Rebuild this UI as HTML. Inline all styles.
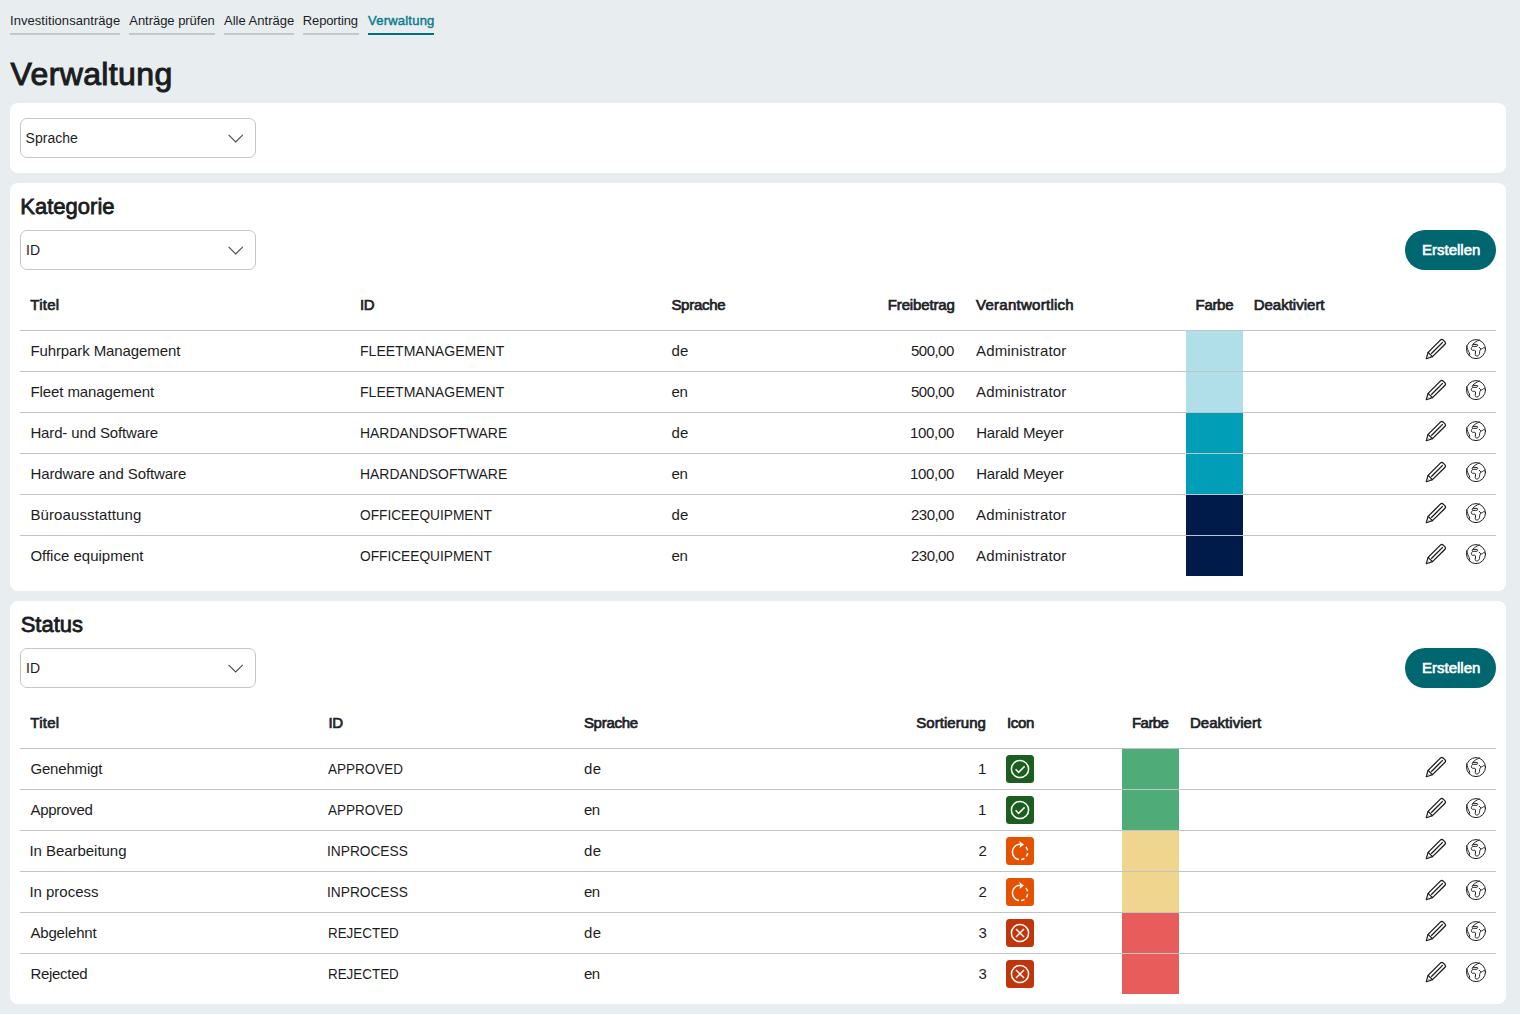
<!DOCTYPE html>
<html><head><meta charset="utf-8"><title>Verwaltung</title><style>
html,body{margin:0;padding:0;}
body{width:1520px;height:1015px;background:#e8edf0;position:relative;overflow:hidden;font-family:"Liberation Sans",sans-serif;color:#1d1d1f;}
.t{position:absolute;white-space:nowrap;line-height:20px;}
.card{position:absolute;left:10px;width:1496px;background:#fff;border-radius:8px;}
.sel{position:absolute;left:20px;width:234px;height:38px;border:1px solid #bfc7ca;border-radius:7px;background:#fff;}
.btn{position:absolute;left:1405px;width:91px;height:40px;border-radius:20px;background:#00666f;}
.hl{position:absolute;left:20px;width:1476px;height:1px;background:#bec6c8;}
.sw{position:absolute;height:40px;width:57px;}
.ic{position:absolute;width:28px;height:28px;}
.ic svg{display:block}
.ul{position:absolute;top:33px;height:2px;background:#c1c8cb;}
.chev{display:block}
</style></head><body>
<div class="ul" style="left:10px;width:110px;"></div>
<div class="ul" style="left:129px;width:86px;"></div>
<div class="ul" style="left:224px;width:70px;"></div>
<div class="ul" style="left:303px;width:56px;"></div>
<div class="ul" style="left:368px;width:66px;background:#00707a;"></div>
<div class="card" style="top:103px;height:70px"></div>
<div class="sel" style="top:118px"></div><div class="t" style="left:228px;top:134px"><svg class="chev" width="16" height="9" viewBox="0 0 16 9"><path d="M0.6 0.9 L7.7 7.9 L14.8 0.9" fill="none" stroke="#4a4a4a" stroke-width="1.1"/></svg></div>
<div class="card" style="top:183px;height:408px"></div>
<div class="sel" style="top:230px"></div><div class="t" style="left:228px;top:246px"><svg class="chev" width="16" height="9" viewBox="0 0 16 9"><path d="M0.6 0.9 L7.7 7.9 L14.8 0.9" fill="none" stroke="#4a4a4a" stroke-width="1.1"/></svg></div>
<div class="btn" style="top:230px"></div>
<div class="sw" style="top:331px;left:1186px;background:#b0dfea"></div>
<div class="hl" style="top:330px"></div>
<div class="ic" style="left:1420px;top:335px"><svg width="28" height="28" viewBox="0 0 28 28"><g fill="none" stroke="#1a1a1a" stroke-width="1.3" stroke-linejoin="round"><path d="M8.1 17.4 L20.6 4.9 Q21.8 3.8 23 4.9 L25 6.9 Q26.1 8.1 25 9.3 L12.5 21.6 Z"/><path d="M8.1 17.4 L6.3 23.6 L12.5 21.6"/><path d="M11.2 18.7 L22.8 7.1"/></g><path d="M6.6 23.3 L7.6 20.4 L9.6 22.4 Z" fill="#9a9a9a"/></svg></div><div class="ic" style="left:1460px;top:335px"><svg width="28" height="28" viewBox="0 0 28 28"><g fill="none" stroke="#222" stroke-width="1.0" stroke-linejoin="round" stroke-linecap="round"><circle cx="16" cy="14.1" r="9.5"/><path d="M19.4 5 C18 5.6 16.8 6 15.8 6.8 C14.6 7.6 13.6 8.4 12.5 9.6 C12 10.3 12.3 11.2 13.1 11.3 L17 11.3 C17.9 11.2 17.9 9.5 17 9.4 L13.2 9.4"/><path d="M12.6 11.5 C11.8 12.2 11.2 13 11.3 14 C11.5 15 12.3 15.3 13.2 15.3 L14.8 15.3 C15.5 15.4 15.6 16 15.5 17 L15.2 19.5 C15.1 20.6 16 21 16.9 21 C18 21 19.2 20 19.5 18.5 L19.7 16.4 C19.8 15.5 20.2 14.8 20.8 14.3"/><path d="M19.2 12.3 C19.6 13 20.2 13.6 20.9 13.8 C21.8 14 22.5 13.6 23.4 12.8 C24.3 12.3 25 12.9 25.6 13.8"/><path d="M6.6 10.8 C7.3 13.8 8.3 16 9.3 17.8 C9.8 18.8 9.8 19.8 9.6 20.6"/></g></svg></div>
<div class="sw" style="top:372px;left:1186px;background:#b0dfea"></div>
<div class="hl" style="top:371px"></div>
<div class="ic" style="left:1420px;top:376px"><svg width="28" height="28" viewBox="0 0 28 28"><g fill="none" stroke="#1a1a1a" stroke-width="1.3" stroke-linejoin="round"><path d="M8.1 17.4 L20.6 4.9 Q21.8 3.8 23 4.9 L25 6.9 Q26.1 8.1 25 9.3 L12.5 21.6 Z"/><path d="M8.1 17.4 L6.3 23.6 L12.5 21.6"/><path d="M11.2 18.7 L22.8 7.1"/></g><path d="M6.6 23.3 L7.6 20.4 L9.6 22.4 Z" fill="#9a9a9a"/></svg></div><div class="ic" style="left:1460px;top:376px"><svg width="28" height="28" viewBox="0 0 28 28"><g fill="none" stroke="#222" stroke-width="1.0" stroke-linejoin="round" stroke-linecap="round"><circle cx="16" cy="14.1" r="9.5"/><path d="M19.4 5 C18 5.6 16.8 6 15.8 6.8 C14.6 7.6 13.6 8.4 12.5 9.6 C12 10.3 12.3 11.2 13.1 11.3 L17 11.3 C17.9 11.2 17.9 9.5 17 9.4 L13.2 9.4"/><path d="M12.6 11.5 C11.8 12.2 11.2 13 11.3 14 C11.5 15 12.3 15.3 13.2 15.3 L14.8 15.3 C15.5 15.4 15.6 16 15.5 17 L15.2 19.5 C15.1 20.6 16 21 16.9 21 C18 21 19.2 20 19.5 18.5 L19.7 16.4 C19.8 15.5 20.2 14.8 20.8 14.3"/><path d="M19.2 12.3 C19.6 13 20.2 13.6 20.9 13.8 C21.8 14 22.5 13.6 23.4 12.8 C24.3 12.3 25 12.9 25.6 13.8"/><path d="M6.6 10.8 C7.3 13.8 8.3 16 9.3 17.8 C9.8 18.8 9.8 19.8 9.6 20.6"/></g></svg></div>
<div class="sw" style="top:413px;left:1186px;background:#009fb7"></div>
<div class="hl" style="top:412px"></div>
<div class="ic" style="left:1420px;top:417px"><svg width="28" height="28" viewBox="0 0 28 28"><g fill="none" stroke="#1a1a1a" stroke-width="1.3" stroke-linejoin="round"><path d="M8.1 17.4 L20.6 4.9 Q21.8 3.8 23 4.9 L25 6.9 Q26.1 8.1 25 9.3 L12.5 21.6 Z"/><path d="M8.1 17.4 L6.3 23.6 L12.5 21.6"/><path d="M11.2 18.7 L22.8 7.1"/></g><path d="M6.6 23.3 L7.6 20.4 L9.6 22.4 Z" fill="#9a9a9a"/></svg></div><div class="ic" style="left:1460px;top:417px"><svg width="28" height="28" viewBox="0 0 28 28"><g fill="none" stroke="#222" stroke-width="1.0" stroke-linejoin="round" stroke-linecap="round"><circle cx="16" cy="14.1" r="9.5"/><path d="M19.4 5 C18 5.6 16.8 6 15.8 6.8 C14.6 7.6 13.6 8.4 12.5 9.6 C12 10.3 12.3 11.2 13.1 11.3 L17 11.3 C17.9 11.2 17.9 9.5 17 9.4 L13.2 9.4"/><path d="M12.6 11.5 C11.8 12.2 11.2 13 11.3 14 C11.5 15 12.3 15.3 13.2 15.3 L14.8 15.3 C15.5 15.4 15.6 16 15.5 17 L15.2 19.5 C15.1 20.6 16 21 16.9 21 C18 21 19.2 20 19.5 18.5 L19.7 16.4 C19.8 15.5 20.2 14.8 20.8 14.3"/><path d="M19.2 12.3 C19.6 13 20.2 13.6 20.9 13.8 C21.8 14 22.5 13.6 23.4 12.8 C24.3 12.3 25 12.9 25.6 13.8"/><path d="M6.6 10.8 C7.3 13.8 8.3 16 9.3 17.8 C9.8 18.8 9.8 19.8 9.6 20.6"/></g></svg></div>
<div class="sw" style="top:454px;left:1186px;background:#009fb7"></div>
<div class="hl" style="top:453px"></div>
<div class="ic" style="left:1420px;top:458px"><svg width="28" height="28" viewBox="0 0 28 28"><g fill="none" stroke="#1a1a1a" stroke-width="1.3" stroke-linejoin="round"><path d="M8.1 17.4 L20.6 4.9 Q21.8 3.8 23 4.9 L25 6.9 Q26.1 8.1 25 9.3 L12.5 21.6 Z"/><path d="M8.1 17.4 L6.3 23.6 L12.5 21.6"/><path d="M11.2 18.7 L22.8 7.1"/></g><path d="M6.6 23.3 L7.6 20.4 L9.6 22.4 Z" fill="#9a9a9a"/></svg></div><div class="ic" style="left:1460px;top:458px"><svg width="28" height="28" viewBox="0 0 28 28"><g fill="none" stroke="#222" stroke-width="1.0" stroke-linejoin="round" stroke-linecap="round"><circle cx="16" cy="14.1" r="9.5"/><path d="M19.4 5 C18 5.6 16.8 6 15.8 6.8 C14.6 7.6 13.6 8.4 12.5 9.6 C12 10.3 12.3 11.2 13.1 11.3 L17 11.3 C17.9 11.2 17.9 9.5 17 9.4 L13.2 9.4"/><path d="M12.6 11.5 C11.8 12.2 11.2 13 11.3 14 C11.5 15 12.3 15.3 13.2 15.3 L14.8 15.3 C15.5 15.4 15.6 16 15.5 17 L15.2 19.5 C15.1 20.6 16 21 16.9 21 C18 21 19.2 20 19.5 18.5 L19.7 16.4 C19.8 15.5 20.2 14.8 20.8 14.3"/><path d="M19.2 12.3 C19.6 13 20.2 13.6 20.9 13.8 C21.8 14 22.5 13.6 23.4 12.8 C24.3 12.3 25 12.9 25.6 13.8"/><path d="M6.6 10.8 C7.3 13.8 8.3 16 9.3 17.8 C9.8 18.8 9.8 19.8 9.6 20.6"/></g></svg></div>
<div class="sw" style="top:495px;left:1186px;background:#001a4a"></div>
<div class="hl" style="top:494px"></div>
<div class="ic" style="left:1420px;top:499px"><svg width="28" height="28" viewBox="0 0 28 28"><g fill="none" stroke="#1a1a1a" stroke-width="1.3" stroke-linejoin="round"><path d="M8.1 17.4 L20.6 4.9 Q21.8 3.8 23 4.9 L25 6.9 Q26.1 8.1 25 9.3 L12.5 21.6 Z"/><path d="M8.1 17.4 L6.3 23.6 L12.5 21.6"/><path d="M11.2 18.7 L22.8 7.1"/></g><path d="M6.6 23.3 L7.6 20.4 L9.6 22.4 Z" fill="#9a9a9a"/></svg></div><div class="ic" style="left:1460px;top:499px"><svg width="28" height="28" viewBox="0 0 28 28"><g fill="none" stroke="#222" stroke-width="1.0" stroke-linejoin="round" stroke-linecap="round"><circle cx="16" cy="14.1" r="9.5"/><path d="M19.4 5 C18 5.6 16.8 6 15.8 6.8 C14.6 7.6 13.6 8.4 12.5 9.6 C12 10.3 12.3 11.2 13.1 11.3 L17 11.3 C17.9 11.2 17.9 9.5 17 9.4 L13.2 9.4"/><path d="M12.6 11.5 C11.8 12.2 11.2 13 11.3 14 C11.5 15 12.3 15.3 13.2 15.3 L14.8 15.3 C15.5 15.4 15.6 16 15.5 17 L15.2 19.5 C15.1 20.6 16 21 16.9 21 C18 21 19.2 20 19.5 18.5 L19.7 16.4 C19.8 15.5 20.2 14.8 20.8 14.3"/><path d="M19.2 12.3 C19.6 13 20.2 13.6 20.9 13.8 C21.8 14 22.5 13.6 23.4 12.8 C24.3 12.3 25 12.9 25.6 13.8"/><path d="M6.6 10.8 C7.3 13.8 8.3 16 9.3 17.8 C9.8 18.8 9.8 19.8 9.6 20.6"/></g></svg></div>
<div class="sw" style="top:536px;left:1186px;background:#001a4a"></div>
<div class="hl" style="top:535px"></div>
<div class="ic" style="left:1420px;top:540px"><svg width="28" height="28" viewBox="0 0 28 28"><g fill="none" stroke="#1a1a1a" stroke-width="1.3" stroke-linejoin="round"><path d="M8.1 17.4 L20.6 4.9 Q21.8 3.8 23 4.9 L25 6.9 Q26.1 8.1 25 9.3 L12.5 21.6 Z"/><path d="M8.1 17.4 L6.3 23.6 L12.5 21.6"/><path d="M11.2 18.7 L22.8 7.1"/></g><path d="M6.6 23.3 L7.6 20.4 L9.6 22.4 Z" fill="#9a9a9a"/></svg></div><div class="ic" style="left:1460px;top:540px"><svg width="28" height="28" viewBox="0 0 28 28"><g fill="none" stroke="#222" stroke-width="1.0" stroke-linejoin="round" stroke-linecap="round"><circle cx="16" cy="14.1" r="9.5"/><path d="M19.4 5 C18 5.6 16.8 6 15.8 6.8 C14.6 7.6 13.6 8.4 12.5 9.6 C12 10.3 12.3 11.2 13.1 11.3 L17 11.3 C17.9 11.2 17.9 9.5 17 9.4 L13.2 9.4"/><path d="M12.6 11.5 C11.8 12.2 11.2 13 11.3 14 C11.5 15 12.3 15.3 13.2 15.3 L14.8 15.3 C15.5 15.4 15.6 16 15.5 17 L15.2 19.5 C15.1 20.6 16 21 16.9 21 C18 21 19.2 20 19.5 18.5 L19.7 16.4 C19.8 15.5 20.2 14.8 20.8 14.3"/><path d="M19.2 12.3 C19.6 13 20.2 13.6 20.9 13.8 C21.8 14 22.5 13.6 23.4 12.8 C24.3 12.3 25 12.9 25.6 13.8"/><path d="M6.6 10.8 C7.3 13.8 8.3 16 9.3 17.8 C9.8 18.8 9.8 19.8 9.6 20.6"/></g></svg></div>
<div class="card" style="top:601px;height:403px"></div>
<div class="sel" style="top:648px"></div><div class="t" style="left:228px;top:664px"><svg class="chev" width="16" height="9" viewBox="0 0 16 9"><path d="M0.6 0.9 L7.7 7.9 L14.8 0.9" fill="none" stroke="#4a4a4a" stroke-width="1.1"/></svg></div>
<div class="btn" style="top:648px"></div>
<div class="sw" style="top:749px;left:1122px;background:#4fac78"></div>
<div class="hl" style="top:748px"></div>
<div class="ic" style="left:1006px;top:755px"><svg width="28" height="28" viewBox="0 0 28 28"><rect width="28" height="28" rx="3.5" fill="#1b5e20"/><circle cx="14" cy="14" r="8.6" fill="none" stroke="#fff" stroke-width="1.5"/><path d="M9.6 14.3 L12.6 17.4 L18.6 11.4" fill="none" stroke="#fff" stroke-width="1.5"/></svg></div>
<div class="ic" style="left:1420px;top:753px"><svg width="28" height="28" viewBox="0 0 28 28"><g fill="none" stroke="#1a1a1a" stroke-width="1.3" stroke-linejoin="round"><path d="M8.1 17.4 L20.6 4.9 Q21.8 3.8 23 4.9 L25 6.9 Q26.1 8.1 25 9.3 L12.5 21.6 Z"/><path d="M8.1 17.4 L6.3 23.6 L12.5 21.6"/><path d="M11.2 18.7 L22.8 7.1"/></g><path d="M6.6 23.3 L7.6 20.4 L9.6 22.4 Z" fill="#9a9a9a"/></svg></div><div class="ic" style="left:1460px;top:753px"><svg width="28" height="28" viewBox="0 0 28 28"><g fill="none" stroke="#222" stroke-width="1.0" stroke-linejoin="round" stroke-linecap="round"><circle cx="16" cy="14.1" r="9.5"/><path d="M19.4 5 C18 5.6 16.8 6 15.8 6.8 C14.6 7.6 13.6 8.4 12.5 9.6 C12 10.3 12.3 11.2 13.1 11.3 L17 11.3 C17.9 11.2 17.9 9.5 17 9.4 L13.2 9.4"/><path d="M12.6 11.5 C11.8 12.2 11.2 13 11.3 14 C11.5 15 12.3 15.3 13.2 15.3 L14.8 15.3 C15.5 15.4 15.6 16 15.5 17 L15.2 19.5 C15.1 20.6 16 21 16.9 21 C18 21 19.2 20 19.5 18.5 L19.7 16.4 C19.8 15.5 20.2 14.8 20.8 14.3"/><path d="M19.2 12.3 C19.6 13 20.2 13.6 20.9 13.8 C21.8 14 22.5 13.6 23.4 12.8 C24.3 12.3 25 12.9 25.6 13.8"/><path d="M6.6 10.8 C7.3 13.8 8.3 16 9.3 17.8 C9.8 18.8 9.8 19.8 9.6 20.6"/></g></svg></div>
<div class="sw" style="top:790px;left:1122px;background:#4fac78"></div>
<div class="hl" style="top:789px"></div>
<div class="ic" style="left:1006px;top:796px"><svg width="28" height="28" viewBox="0 0 28 28"><rect width="28" height="28" rx="3.5" fill="#1b5e20"/><circle cx="14" cy="14" r="8.6" fill="none" stroke="#fff" stroke-width="1.5"/><path d="M9.6 14.3 L12.6 17.4 L18.6 11.4" fill="none" stroke="#fff" stroke-width="1.5"/></svg></div>
<div class="ic" style="left:1420px;top:794px"><svg width="28" height="28" viewBox="0 0 28 28"><g fill="none" stroke="#1a1a1a" stroke-width="1.3" stroke-linejoin="round"><path d="M8.1 17.4 L20.6 4.9 Q21.8 3.8 23 4.9 L25 6.9 Q26.1 8.1 25 9.3 L12.5 21.6 Z"/><path d="M8.1 17.4 L6.3 23.6 L12.5 21.6"/><path d="M11.2 18.7 L22.8 7.1"/></g><path d="M6.6 23.3 L7.6 20.4 L9.6 22.4 Z" fill="#9a9a9a"/></svg></div><div class="ic" style="left:1460px;top:794px"><svg width="28" height="28" viewBox="0 0 28 28"><g fill="none" stroke="#222" stroke-width="1.0" stroke-linejoin="round" stroke-linecap="round"><circle cx="16" cy="14.1" r="9.5"/><path d="M19.4 5 C18 5.6 16.8 6 15.8 6.8 C14.6 7.6 13.6 8.4 12.5 9.6 C12 10.3 12.3 11.2 13.1 11.3 L17 11.3 C17.9 11.2 17.9 9.5 17 9.4 L13.2 9.4"/><path d="M12.6 11.5 C11.8 12.2 11.2 13 11.3 14 C11.5 15 12.3 15.3 13.2 15.3 L14.8 15.3 C15.5 15.4 15.6 16 15.5 17 L15.2 19.5 C15.1 20.6 16 21 16.9 21 C18 21 19.2 20 19.5 18.5 L19.7 16.4 C19.8 15.5 20.2 14.8 20.8 14.3"/><path d="M19.2 12.3 C19.6 13 20.2 13.6 20.9 13.8 C21.8 14 22.5 13.6 23.4 12.8 C24.3 12.3 25 12.9 25.6 13.8"/><path d="M6.6 10.8 C7.3 13.8 8.3 16 9.3 17.8 C9.8 18.8 9.8 19.8 9.6 20.6"/></g></svg></div>
<div class="sw" style="top:831px;left:1122px;background:#efd58e"></div>
<div class="hl" style="top:830px"></div>
<div class="ic" style="left:1006px;top:837px"><svg width="28" height="28" viewBox="0 0 28 28"><rect width="28" height="28" rx="3.5" fill="#e65100"/><path d="M12.9 22.6 A7.7 7.7 0 0 1 14.2 7.3" fill="none" stroke="#fff" stroke-width="1.5"/><path d="M13.2 4.1 L17.9 7.5 L13.5 11 L14.2 7.5 Z" fill="#fff"/><path d="M19.9 10.05 A7.7 7.7 0 0 1 15.2 22.6" fill="none" stroke="#fff" stroke-width="1.5" stroke-dasharray="3.7 2.6"/></svg></div>
<div class="ic" style="left:1420px;top:835px"><svg width="28" height="28" viewBox="0 0 28 28"><g fill="none" stroke="#1a1a1a" stroke-width="1.3" stroke-linejoin="round"><path d="M8.1 17.4 L20.6 4.9 Q21.8 3.8 23 4.9 L25 6.9 Q26.1 8.1 25 9.3 L12.5 21.6 Z"/><path d="M8.1 17.4 L6.3 23.6 L12.5 21.6"/><path d="M11.2 18.7 L22.8 7.1"/></g><path d="M6.6 23.3 L7.6 20.4 L9.6 22.4 Z" fill="#9a9a9a"/></svg></div><div class="ic" style="left:1460px;top:835px"><svg width="28" height="28" viewBox="0 0 28 28"><g fill="none" stroke="#222" stroke-width="1.0" stroke-linejoin="round" stroke-linecap="round"><circle cx="16" cy="14.1" r="9.5"/><path d="M19.4 5 C18 5.6 16.8 6 15.8 6.8 C14.6 7.6 13.6 8.4 12.5 9.6 C12 10.3 12.3 11.2 13.1 11.3 L17 11.3 C17.9 11.2 17.9 9.5 17 9.4 L13.2 9.4"/><path d="M12.6 11.5 C11.8 12.2 11.2 13 11.3 14 C11.5 15 12.3 15.3 13.2 15.3 L14.8 15.3 C15.5 15.4 15.6 16 15.5 17 L15.2 19.5 C15.1 20.6 16 21 16.9 21 C18 21 19.2 20 19.5 18.5 L19.7 16.4 C19.8 15.5 20.2 14.8 20.8 14.3"/><path d="M19.2 12.3 C19.6 13 20.2 13.6 20.9 13.8 C21.8 14 22.5 13.6 23.4 12.8 C24.3 12.3 25 12.9 25.6 13.8"/><path d="M6.6 10.8 C7.3 13.8 8.3 16 9.3 17.8 C9.8 18.8 9.8 19.8 9.6 20.6"/></g></svg></div>
<div class="sw" style="top:872px;left:1122px;background:#efd58e"></div>
<div class="hl" style="top:871px"></div>
<div class="ic" style="left:1006px;top:878px"><svg width="28" height="28" viewBox="0 0 28 28"><rect width="28" height="28" rx="3.5" fill="#e65100"/><path d="M12.9 22.6 A7.7 7.7 0 0 1 14.2 7.3" fill="none" stroke="#fff" stroke-width="1.5"/><path d="M13.2 4.1 L17.9 7.5 L13.5 11 L14.2 7.5 Z" fill="#fff"/><path d="M19.9 10.05 A7.7 7.7 0 0 1 15.2 22.6" fill="none" stroke="#fff" stroke-width="1.5" stroke-dasharray="3.7 2.6"/></svg></div>
<div class="ic" style="left:1420px;top:876px"><svg width="28" height="28" viewBox="0 0 28 28"><g fill="none" stroke="#1a1a1a" stroke-width="1.3" stroke-linejoin="round"><path d="M8.1 17.4 L20.6 4.9 Q21.8 3.8 23 4.9 L25 6.9 Q26.1 8.1 25 9.3 L12.5 21.6 Z"/><path d="M8.1 17.4 L6.3 23.6 L12.5 21.6"/><path d="M11.2 18.7 L22.8 7.1"/></g><path d="M6.6 23.3 L7.6 20.4 L9.6 22.4 Z" fill="#9a9a9a"/></svg></div><div class="ic" style="left:1460px;top:876px"><svg width="28" height="28" viewBox="0 0 28 28"><g fill="none" stroke="#222" stroke-width="1.0" stroke-linejoin="round" stroke-linecap="round"><circle cx="16" cy="14.1" r="9.5"/><path d="M19.4 5 C18 5.6 16.8 6 15.8 6.8 C14.6 7.6 13.6 8.4 12.5 9.6 C12 10.3 12.3 11.2 13.1 11.3 L17 11.3 C17.9 11.2 17.9 9.5 17 9.4 L13.2 9.4"/><path d="M12.6 11.5 C11.8 12.2 11.2 13 11.3 14 C11.5 15 12.3 15.3 13.2 15.3 L14.8 15.3 C15.5 15.4 15.6 16 15.5 17 L15.2 19.5 C15.1 20.6 16 21 16.9 21 C18 21 19.2 20 19.5 18.5 L19.7 16.4 C19.8 15.5 20.2 14.8 20.8 14.3"/><path d="M19.2 12.3 C19.6 13 20.2 13.6 20.9 13.8 C21.8 14 22.5 13.6 23.4 12.8 C24.3 12.3 25 12.9 25.6 13.8"/><path d="M6.6 10.8 C7.3 13.8 8.3 16 9.3 17.8 C9.8 18.8 9.8 19.8 9.6 20.6"/></g></svg></div>
<div class="sw" style="top:913px;left:1122px;background:#e85c5c"></div>
<div class="hl" style="top:912px"></div>
<div class="ic" style="left:1006px;top:919px"><svg width="28" height="28" viewBox="0 0 28 28"><rect width="28" height="28" rx="3.5" fill="#bf360c"/><circle cx="14" cy="14" r="8.6" fill="none" stroke="#fff" stroke-width="1.5"/><path d="M10 10 L18 18 M18 10 L10 18" fill="none" stroke="#fff" stroke-width="1.5"/></svg></div>
<div class="ic" style="left:1420px;top:917px"><svg width="28" height="28" viewBox="0 0 28 28"><g fill="none" stroke="#1a1a1a" stroke-width="1.3" stroke-linejoin="round"><path d="M8.1 17.4 L20.6 4.9 Q21.8 3.8 23 4.9 L25 6.9 Q26.1 8.1 25 9.3 L12.5 21.6 Z"/><path d="M8.1 17.4 L6.3 23.6 L12.5 21.6"/><path d="M11.2 18.7 L22.8 7.1"/></g><path d="M6.6 23.3 L7.6 20.4 L9.6 22.4 Z" fill="#9a9a9a"/></svg></div><div class="ic" style="left:1460px;top:917px"><svg width="28" height="28" viewBox="0 0 28 28"><g fill="none" stroke="#222" stroke-width="1.0" stroke-linejoin="round" stroke-linecap="round"><circle cx="16" cy="14.1" r="9.5"/><path d="M19.4 5 C18 5.6 16.8 6 15.8 6.8 C14.6 7.6 13.6 8.4 12.5 9.6 C12 10.3 12.3 11.2 13.1 11.3 L17 11.3 C17.9 11.2 17.9 9.5 17 9.4 L13.2 9.4"/><path d="M12.6 11.5 C11.8 12.2 11.2 13 11.3 14 C11.5 15 12.3 15.3 13.2 15.3 L14.8 15.3 C15.5 15.4 15.6 16 15.5 17 L15.2 19.5 C15.1 20.6 16 21 16.9 21 C18 21 19.2 20 19.5 18.5 L19.7 16.4 C19.8 15.5 20.2 14.8 20.8 14.3"/><path d="M19.2 12.3 C19.6 13 20.2 13.6 20.9 13.8 C21.8 14 22.5 13.6 23.4 12.8 C24.3 12.3 25 12.9 25.6 13.8"/><path d="M6.6 10.8 C7.3 13.8 8.3 16 9.3 17.8 C9.8 18.8 9.8 19.8 9.6 20.6"/></g></svg></div>
<div class="sw" style="top:954px;left:1122px;background:#e85c5c"></div>
<div class="hl" style="top:953px"></div>
<div class="ic" style="left:1006px;top:960px"><svg width="28" height="28" viewBox="0 0 28 28"><rect width="28" height="28" rx="3.5" fill="#bf360c"/><circle cx="14" cy="14" r="8.6" fill="none" stroke="#fff" stroke-width="1.5"/><path d="M10 10 L18 18 M18 10 L10 18" fill="none" stroke="#fff" stroke-width="1.5"/></svg></div>
<div class="ic" style="left:1420px;top:958px"><svg width="28" height="28" viewBox="0 0 28 28"><g fill="none" stroke="#1a1a1a" stroke-width="1.3" stroke-linejoin="round"><path d="M8.1 17.4 L20.6 4.9 Q21.8 3.8 23 4.9 L25 6.9 Q26.1 8.1 25 9.3 L12.5 21.6 Z"/><path d="M8.1 17.4 L6.3 23.6 L12.5 21.6"/><path d="M11.2 18.7 L22.8 7.1"/></g><path d="M6.6 23.3 L7.6 20.4 L9.6 22.4 Z" fill="#9a9a9a"/></svg></div><div class="ic" style="left:1460px;top:958px"><svg width="28" height="28" viewBox="0 0 28 28"><g fill="none" stroke="#222" stroke-width="1.0" stroke-linejoin="round" stroke-linecap="round"><circle cx="16" cy="14.1" r="9.5"/><path d="M19.4 5 C18 5.6 16.8 6 15.8 6.8 C14.6 7.6 13.6 8.4 12.5 9.6 C12 10.3 12.3 11.2 13.1 11.3 L17 11.3 C17.9 11.2 17.9 9.5 17 9.4 L13.2 9.4"/><path d="M12.6 11.5 C11.8 12.2 11.2 13 11.3 14 C11.5 15 12.3 15.3 13.2 15.3 L14.8 15.3 C15.5 15.4 15.6 16 15.5 17 L15.2 19.5 C15.1 20.6 16 21 16.9 21 C18 21 19.2 20 19.5 18.5 L19.7 16.4 C19.8 15.5 20.2 14.8 20.8 14.3"/><path d="M19.2 12.3 C19.6 13 20.2 13.6 20.9 13.8 C21.8 14 22.5 13.6 23.4 12.8 C24.3 12.3 25 12.9 25.6 13.8"/><path d="M6.6 10.8 C7.3 13.8 8.3 16 9.3 17.8 C9.8 18.8 9.8 19.8 9.6 20.6"/></g></svg></div>
<div class="t" style="top:11px;color:#1d1d1f;font-size:13px;letter-spacing:0.056px;left:10.00px;">Investitionsanträge</div>
<div class="t" style="top:11px;color:#1d1d1f;font-size:13px;letter-spacing:-0.038px;left:129.30px;">Anträge prüfen</div>
<div class="t" style="top:11px;color:#1d1d1f;font-size:13px;letter-spacing:0.009px;left:224.00px;">Alle Anträge</div>
<div class="t" style="top:11px;color:#1d1d1f;font-size:13px;letter-spacing:-0.137px;left:302.80px;">Reporting</div>
<div class="t" style="top:11px;color:#0d7d8c;font-size:13px;-webkit-text-stroke:0.45px #0d7d8c;letter-spacing:0.222px;left:368.00px;">Verwaltung</div>
<div class="t" style="top:64px;color:#1a1c1e;font-size:32px;-webkit-text-stroke:1.0px #1a1c1e;letter-spacing:0.367px;left:10.60px;">Verwaltung</div>
<div class="t" style="top:128px;color:#1d1d1f;font-size:14px;left:25.60px;">Sprache</div>
<div class="t" style="top:197px;color:#1a1c1e;font-size:22px;-webkit-text-stroke:0.8px #1a1c1e;letter-spacing:0.013px;left:20.30px;">Kategorie</div>
<div class="t" style="top:240px;color:#1d1d1f;font-size:14px;left:26.00px;">ID</div>
<div class="t" style="top:240px;color:#fff;font-size:15px;-webkit-text-stroke:0.6px #fff;left:1422.00px;">Erstellen</div>
<div class="t" style="top:295px;color:#1c2228;font-size:15px;-webkit-text-stroke:0.7px #1c2228;letter-spacing:0.250px;left:30.30px;">Titel</div>
<div class="t" style="top:295px;color:#1c2228;font-size:15px;-webkit-text-stroke:0.7px #1c2228;letter-spacing:-0.400px;left:360.00px;">ID</div>
<div class="t" style="top:295px;color:#1c2228;font-size:15px;-webkit-text-stroke:0.7px #1c2228;letter-spacing:-0.283px;left:671.40px;">Sprache</div>
<div class="t" style="top:295px;color:#1c2228;font-size:15px;-webkit-text-stroke:0.7px #1c2228;letter-spacing:-0.144px;left:887.80px;">Freibetrag</div>
<div class="t" style="top:295px;color:#1c2228;font-size:15px;-webkit-text-stroke:0.7px #1c2228;letter-spacing:0.269px;left:976.00px;">Verantwortlich</div>
<div class="t" style="top:295px;color:#1c2228;font-size:15px;-webkit-text-stroke:0.7px #1c2228;letter-spacing:-0.325px;left:1195.60px;">Farbe</div>
<div class="t" style="top:295px;color:#1c2228;font-size:15px;-webkit-text-stroke:0.7px #1c2228;left:1253.70px;">Deaktiviert</div>
<div class="t" style="top:341px;color:#1d1d1f;font-size:15px;letter-spacing:-0.100px;left:30.40px;">Fuhrpark Management</div>
<div class="t" style="top:341px;color:#1d1d1f;font-size:15px;transform:scaleX(0.9357);transform-origin:0 0;left:360.40px;">FLEETMANAGEMENT</div>
<div class="t" style="top:341px;color:#1d1d1f;font-size:15px;letter-spacing:0.200px;left:671.50px;">de</div>
<div class="t" style="top:341px;color:#1d1d1f;font-size:15px;letter-spacing:-0.520px;left:911.00px;">500,00</div>
<div class="t" style="top:341px;color:#1d1d1f;font-size:15px;letter-spacing:0.167px;left:976.00px;">Administrator</div>
<div class="t" style="top:382px;color:#1d1d1f;font-size:15px;letter-spacing:-0.087px;left:30.40px;">Fleet management</div>
<div class="t" style="top:382px;color:#1d1d1f;font-size:15px;transform:scaleX(0.9357);transform-origin:0 0;left:360.40px;">FLEETMANAGEMENT</div>
<div class="t" style="top:382px;color:#1d1d1f;font-size:15px;letter-spacing:-0.400px;left:671.50px;">en</div>
<div class="t" style="top:382px;color:#1d1d1f;font-size:15px;letter-spacing:-0.520px;left:911.00px;">500,00</div>
<div class="t" style="top:382px;color:#1d1d1f;font-size:15px;letter-spacing:0.167px;left:976.00px;">Administrator</div>
<div class="t" style="top:423px;color:#1d1d1f;font-size:15px;letter-spacing:-0.135px;left:30.40px;">Hard- und Software</div>
<div class="t" style="top:423px;color:#1d1d1f;font-size:15px;transform:scaleX(0.9278);transform-origin:0 0;left:360.40px;">HARDANDSOFTWARE</div>
<div class="t" style="top:423px;color:#1d1d1f;font-size:15px;letter-spacing:0.200px;left:671.50px;">de</div>
<div class="t" style="top:423px;color:#1d1d1f;font-size:15px;letter-spacing:-0.320px;left:910.00px;">100,00</div>
<div class="t" style="top:423px;color:#1d1d1f;font-size:15px;letter-spacing:-0.236px;left:976.20px;">Harald Meyer</div>
<div class="t" style="top:464px;color:#1d1d1f;font-size:15px;letter-spacing:-0.080px;left:30.40px;">Hardware and Software</div>
<div class="t" style="top:464px;color:#1d1d1f;font-size:15px;transform:scaleX(0.9278);transform-origin:0 0;left:360.40px;">HARDANDSOFTWARE</div>
<div class="t" style="top:464px;color:#1d1d1f;font-size:15px;letter-spacing:-0.400px;left:671.50px;">en</div>
<div class="t" style="top:464px;color:#1d1d1f;font-size:15px;letter-spacing:-0.320px;left:910.00px;">100,00</div>
<div class="t" style="top:464px;color:#1d1d1f;font-size:15px;letter-spacing:-0.236px;left:976.20px;">Harald Meyer</div>
<div class="t" style="top:505px;color:#1d1d1f;font-size:15px;letter-spacing:0.114px;left:30.40px;">Büroausstattung</div>
<div class="t" style="top:505px;color:#1d1d1f;font-size:15px;transform:scaleX(0.9139);transform-origin:0 0;left:360.40px;">OFFICEEQUIPMENT</div>
<div class="t" style="top:505px;color:#1d1d1f;font-size:15px;letter-spacing:0.200px;left:671.50px;">de</div>
<div class="t" style="top:505px;color:#1d1d1f;font-size:15px;letter-spacing:-0.520px;left:911.00px;">230,00</div>
<div class="t" style="top:505px;color:#1d1d1f;font-size:15px;letter-spacing:0.167px;left:976.00px;">Administrator</div>
<div class="t" style="top:546px;color:#1d1d1f;font-size:15px;left:30.40px;">Office equipment</div>
<div class="t" style="top:546px;color:#1d1d1f;font-size:15px;transform:scaleX(0.9139);transform-origin:0 0;left:360.40px;">OFFICEEQUIPMENT</div>
<div class="t" style="top:546px;color:#1d1d1f;font-size:15px;letter-spacing:-0.400px;left:671.50px;">en</div>
<div class="t" style="top:546px;color:#1d1d1f;font-size:15px;letter-spacing:-0.520px;left:911.00px;">230,00</div>
<div class="t" style="top:546px;color:#1d1d1f;font-size:15px;letter-spacing:0.167px;left:976.00px;">Administrator</div>
<div class="t" style="top:615px;color:#1a1c1e;font-size:22px;-webkit-text-stroke:0.8px #1a1c1e;left:20.70px;">Status</div>
<div class="t" style="top:658px;color:#1d1d1f;font-size:14px;left:26.00px;">ID</div>
<div class="t" style="top:658px;color:#fff;font-size:15px;-webkit-text-stroke:0.6px #fff;left:1422.00px;">Erstellen</div>
<div class="t" style="top:713px;color:#1c2228;font-size:15px;-webkit-text-stroke:0.7px #1c2228;letter-spacing:0.250px;left:30.30px;">Titel</div>
<div class="t" style="top:713px;color:#1c2228;font-size:15px;-webkit-text-stroke:0.7px #1c2228;letter-spacing:-0.400px;left:328.40px;">ID</div>
<div class="t" style="top:713px;color:#1c2228;font-size:15px;-webkit-text-stroke:0.7px #1c2228;letter-spacing:-0.283px;left:583.90px;">Sprache</div>
<div class="t" style="top:713px;color:#1c2228;font-size:15px;-webkit-text-stroke:0.7px #1c2228;letter-spacing:0.056px;left:916.25px;">Sortierung</div>
<div class="t" style="top:713px;color:#1c2228;font-size:15px;-webkit-text-stroke:0.7px #1c2228;letter-spacing:-0.333px;left:1007.00px;">Icon</div>
<div class="t" style="top:713px;color:#1c2228;font-size:15px;-webkit-text-stroke:0.7px #1c2228;letter-spacing:-0.562px;left:1132.00px;">Farbe</div>
<div class="t" style="top:713px;color:#1c2228;font-size:15px;-webkit-text-stroke:0.7px #1c2228;letter-spacing:0.025px;left:1190.00px;">Deaktiviert</div>
<div class="t" style="top:759px;color:#1d1d1f;font-size:15px;letter-spacing:-0.162px;left:30.40px;">Genehmigt</div>
<div class="t" style="top:759px;color:#1d1d1f;font-size:15px;transform:scaleX(0.8988);transform-origin:0 0;left:328.40px;">APPROVED</div>
<div class="t" style="top:759px;color:#1d1d1f;font-size:15px;letter-spacing:0.500px;left:583.90px;">de</div>
<div class="t" style="top:759px;color:#1d1d1f;font-size:15px;letter-spacing:-0.400px;left:978.00px;">1</div>
<div class="t" style="top:800px;color:#1d1d1f;font-size:15px;letter-spacing:-0.257px;left:30.40px;">Approved</div>
<div class="t" style="top:800px;color:#1d1d1f;font-size:15px;transform:scaleX(0.8988);transform-origin:0 0;left:328.40px;">APPROVED</div>
<div class="t" style="top:800px;color:#1d1d1f;font-size:15px;letter-spacing:-0.400px;left:583.90px;">en</div>
<div class="t" style="top:800px;color:#1d1d1f;font-size:15px;letter-spacing:-0.400px;left:978.00px;">1</div>
<div class="t" style="top:841px;color:#1d1d1f;font-size:15px;letter-spacing:-0.038px;left:29.40px;">In Bearbeitung</div>
<div class="t" style="top:841px;color:#1d1d1f;font-size:15px;transform:scaleX(0.9149);transform-origin:0 0;left:327.49px;">INPROCESS</div>
<div class="t" style="top:841px;color:#1d1d1f;font-size:15px;letter-spacing:0.500px;left:583.90px;">de</div>
<div class="t" style="top:841px;color:#1d1d1f;font-size:15px;letter-spacing:-0.400px;left:978.40px;">2</div>
<div class="t" style="top:882px;color:#1d1d1f;font-size:15px;letter-spacing:-0.011px;left:29.40px;">In process</div>
<div class="t" style="top:882px;color:#1d1d1f;font-size:15px;transform:scaleX(0.9149);transform-origin:0 0;left:327.49px;">INPROCESS</div>
<div class="t" style="top:882px;color:#1d1d1f;font-size:15px;letter-spacing:-0.400px;left:583.90px;">en</div>
<div class="t" style="top:882px;color:#1d1d1f;font-size:15px;letter-spacing:-0.400px;left:978.40px;">2</div>
<div class="t" style="top:923px;color:#1d1d1f;font-size:15px;letter-spacing:-0.162px;left:30.40px;">Abgelehnt</div>
<div class="t" style="top:923px;color:#1d1d1f;font-size:15px;transform:scaleX(0.8937);transform-origin:0 0;left:328.40px;">REJECTED</div>
<div class="t" style="top:923px;color:#1d1d1f;font-size:15px;letter-spacing:0.500px;left:583.90px;">de</div>
<div class="t" style="top:923px;color:#1d1d1f;font-size:15px;letter-spacing:-0.400px;left:978.50px;">3</div>
<div class="t" style="top:964px;color:#1d1d1f;font-size:15px;letter-spacing:-0.286px;left:30.40px;">Rejected</div>
<div class="t" style="top:964px;color:#1d1d1f;font-size:15px;transform:scaleX(0.8937);transform-origin:0 0;left:328.40px;">REJECTED</div>
<div class="t" style="top:964px;color:#1d1d1f;font-size:15px;letter-spacing:-0.400px;left:583.90px;">en</div>
<div class="t" style="top:964px;color:#1d1d1f;font-size:15px;letter-spacing:-0.400px;left:978.50px;">3</div>
<div style="position:absolute;left:0;top:1014px;width:1520px;height:1px;background:#fbfcfc"></div>
</body></html>
